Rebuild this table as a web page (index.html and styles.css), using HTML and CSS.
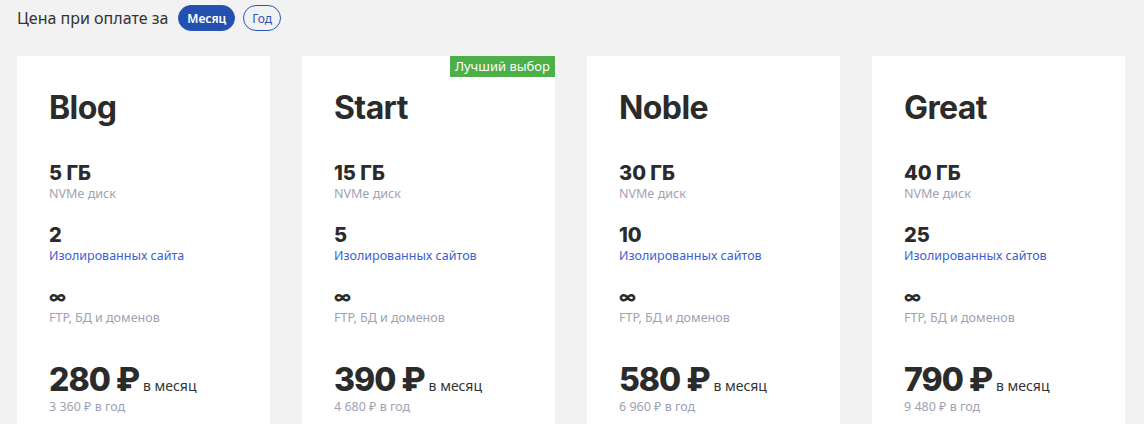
FILE: index.html
```html
<!DOCTYPE html>
<html lang="ru">
<head>
<meta charset="utf-8">
<link rel="stylesheet" href="styles.css">
</head>
<body>
<div class="page">
  <div class="period">
    <span class="period-label">Цена при оплате за</span>
    <span class="pill pill-active">Месяц</span>
    <span class="pill">Год</span>
  </div>
  <div class="plans">
    <div class="card">
      <h2 class="title">Blog</h2>
      <div class="feat"><div class="val">5 ГБ</div><div class="lbl">NVMe диск</div></div>
      <div class="feat"><div class="val">2</div><div class="lbl lbl-link">Изолированных сайта</div></div>
      <div class="feat"><div class="val inf">∞</div><div class="lbl">FTP, БД и доменов</div></div>
      <div class="price"><span class="amount">280 ₽</span><span class="per">в месяц</span></div>
      <div class="year">3 360 ₽ в год</div>
    </div>
    <div class="card">
      <span class="badge">Лучший выбор</span>
      <h2 class="title">Start</h2>
      <div class="feat"><div class="val">15 ГБ</div><div class="lbl">NVMe диск</div></div>
      <div class="feat"><div class="val">5</div><div class="lbl lbl-link">Изолированных сайтов</div></div>
      <div class="feat"><div class="val inf">∞</div><div class="lbl">FTP, БД и доменов</div></div>
      <div class="price"><span class="amount">390 ₽</span><span class="per">в месяц</span></div>
      <div class="year">4 680 ₽ в год</div>
    </div>
    <div class="card">
      <h2 class="title">Noble</h2>
      <div class="feat"><div class="val">30 ГБ</div><div class="lbl">NVMe диск</div></div>
      <div class="feat"><div class="val">10</div><div class="lbl lbl-link">Изолированных сайтов</div></div>
      <div class="feat"><div class="val inf">∞</div><div class="lbl">FTP, БД и доменов</div></div>
      <div class="price"><span class="amount">580 ₽</span><span class="per">в месяц</span></div>
      <div class="year">6 960 ₽ в год</div>
    </div>
    <div class="card">
      <h2 class="title">Great</h2>
      <div class="feat"><div class="val">40 ГБ</div><div class="lbl">NVMe диск</div></div>
      <div class="feat"><div class="val">25</div><div class="lbl lbl-link">Изолированных сайтов</div></div>
      <div class="feat"><div class="val inf">∞</div><div class="lbl">FTP, БД и доменов</div></div>
      <div class="price"><span class="amount">790 ₽</span><span class="per">в месяц</span></div>
      <div class="year">9 480 ₽ в год</div>
    </div>
  </div>
</div>
</body>
</html>
```

FILE: styles.css
```css
html, body {
  margin: 0;
  padding: 0;
  background: #f2f2f2;
}
body {
  font-family: "Noto Sans", "Open Sans", sans-serif;
  color: #2b2b2b;
  overflow: hidden;
}
.page {
  padding: 5px 17px 0 17px;
}
.period {
  display: flex;
  align-items: center;
  height: 26px;
}
.period-label {
  font-size: 16px;
  color: #333;
  margin-right: 10px;
}
.pill {
  box-sizing: border-box;
  height: 26px;
  padding: 0 8px;
  border-radius: 13px;
  border: 1px solid #2a55b8;
  color: #2a55b8;
  font-size: 12px;
  display: flex;
  align-items: center;
  margin-right: 8px;
}
.pill-active {
  background: #234fae;
  color: #fff;
  font-weight: 600;
}
.plans {
  display: grid;
  grid-template-columns: repeat(4, 253px);
  column-gap: 32px;
  margin-top: 25px;
}
.card {
  position: relative;
  background: #fff;
  padding: 32px 32px 30px 32px;
  height: 400px;
  box-sizing: border-box;
}
.badge {
  position: absolute;
  top: 0;
  right: 0;
  background: #4caf48;
  color: #fff;
  font-size: 13px;
  font-weight: 400;
  height: 21px;
  line-height: 21px;
  padding: 0 5px;
}
.title {
  margin: 0 0 33px 0;
  font-family: "Inter", sans-serif;
  font-weight: 700;
  font-size: 32px;
  letter-spacing: -0.6px;
  line-height: 40px;
  color: #2b2b2b;
}
.feat {
  margin-bottom: 21px;
}
.val {
  font-family: "Inter", sans-serif;
  font-weight: 800;
  font-size: 20px;
  line-height: 24px;
  color: #2b2b2b;
}
.val.inf {
  font-size: 17px;
}
.lbl {
  font-size: 12.5px;
  line-height: 17px;
  color: #9ea2b3;
}
.lbl-link {
  color: #3b5fd0;
}
.price {
  margin-top: 36px;
  display: flex;
  align-items: baseline;
}
.amount {
  font-family: "Inter", sans-serif;
  font-weight: 800;
  font-size: 32px;
  letter-spacing: -1px;
  line-height: 36px;
  color: #2b2b2b;
  margin-right: 4px;
}
.per {
  font-size: 14px;
  color: #333;
}
.year {
  font-size: 12.5px;
  color: #9ea2b3;
  line-height: 18px;
}
```
